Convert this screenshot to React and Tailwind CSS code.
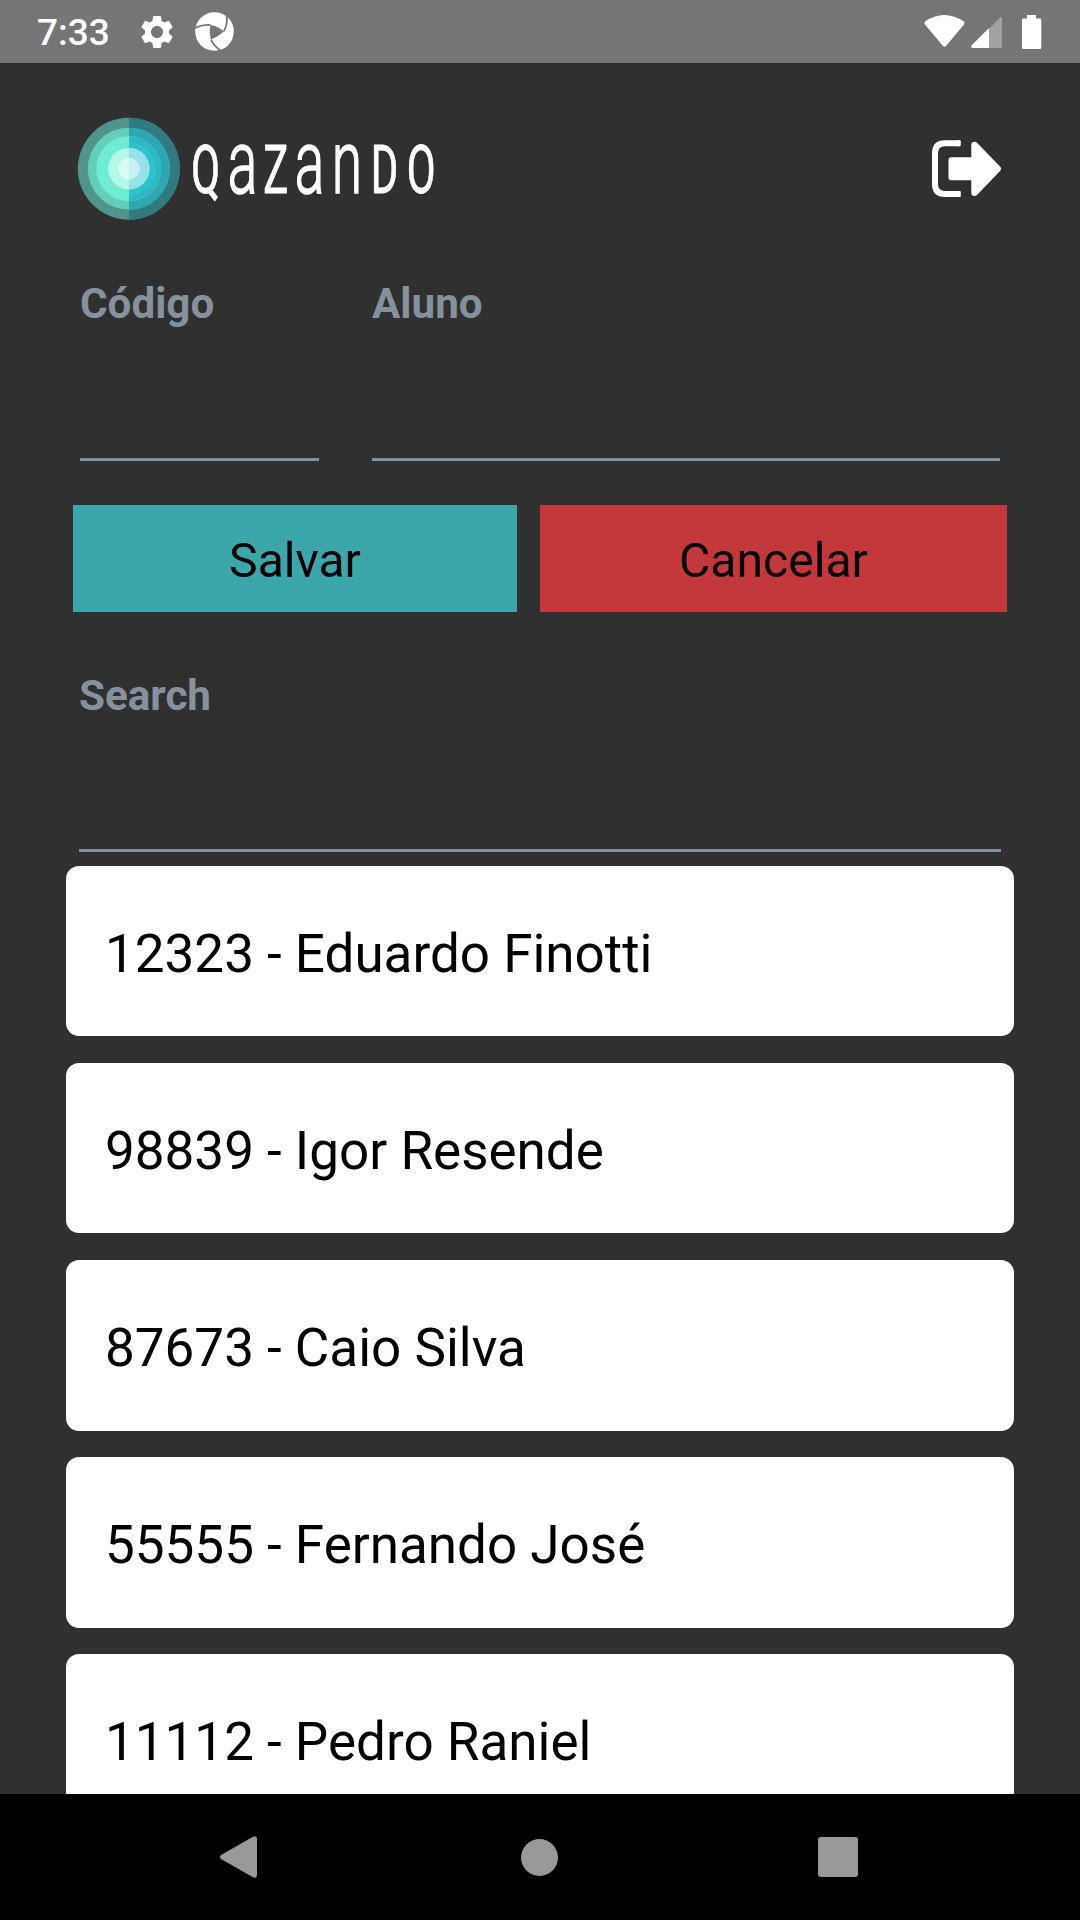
import { MdSettings } from "react-icons/md";

const students = [
  "12323 - Eduardo Finotti",
  "98839 - Igor Resende",
  "87673 - Caio Silva",
  "55555 - Fernando José",
  "11112 - Pedro Raniel",
];

const rings = [
  [51, "#51958a", "#317b80"],
  [41, "#64cfb9", "#2da7b1"],
  [32.5, "#6fecd4", "#2bb9c3"],
  [26, "#6fecd4", "#2bc3cf"],
  [20.7, "#b5f7e9", "#98e1e6"],
  [10.7, "#dbfbf5", "#c9f0f2"],
];

function StatusBar() {
  return (
    <header className="flex h-[63px] shrink-0 items-center bg-[#757575] pl-[37px] pr-[38px] text-white">
      <span className="w-[100px] pt-[3px] text-[37px] leading-[60px] font-medium">7:33</span>
      <MdSettings className="size-10" />
      <svg className="ml-[18px] size-[39px]" viewBox="195 12 39 39">
        <circle cx="214.500" cy="31.500" r="19.300" fill="#fff" />
        <path d="M210.500 25 Q208.800 33 211 39.500 Q218 37 223.500 31.500 Q218 26 210.500 25Z" fill="#757575" />
        <path d="M195 28 Q203 24 210.500 25M226.500 15 Q228 25 223.500 31.500M221 51 Q213 45 211 39.500" fill="none" stroke="#757575" strokeWidth="1.800" />
      </svg>
      <svg className="ml-auto h-[36px] w-[118px]" viewBox="924 13 118 36">
        <path d="M925 20.500 Q944 7.500 964 20.500 Q965 22 964 23.500 L946 45 Q944.500 46.500 943 45 L925 23.500 Q924 22 925 20.500Z" fill="#fff" />
        <path d="M989 28 L1000 16.500 Q1002 15.500 1002 17 V46 Q1002 47 1001 47 H989Z" fill="#a1a1a1" />
        <path d="M989 27 V47 H972 Q970.500 46 971.500 44.500Z" fill="#fff" />
        <path d="M1027 14 H1036 V17.500 H1040 Q1041.300 17.500 1041.300 19 V46.500 Q1041.300 48 1040 48 H1023 Q1022 48 1022 46.500 V19 Q1022 17.500 1023 17.500 H1027Z" fill="#fff" />
      </svg>
    </header>
  );
}

function Logo() {
  return (
    <svg className="h-[130px] w-[360px] overflow-visible" viewBox="77 104 360 130">
      {rings.map(([r, left, right]) => (
        <g key={r}>
          <circle cx="128.800" cy="168.700" r={r} fill={left} />
          <path d={`M129 ${168.7 - r} a${r - 0.2} ${r} 0 0 1 0 ${2 * r}Z`} fill={right} />
        </g>
      ))}
      <text y="193.300" transform="scale(.62 1)" fill="#fff" stroke="#fff" fontSize="67.500" fontFamily="Roboto, sans-serif">
        <tspan x="308.500" strokeWidth=".9">Q</tspan>
        <tspan x="367.500" fontSize="89" fontWeight="300" strokeWidth="1.700">a</tspan>
        <tspan x="424.500" strokeWidth=".9">Z</tspan>
        <tspan x="475.500" fontSize="89" fontWeight="300" strokeWidth="1.700">a</tspan>
        <tspan x="535" fontSize="89" fontWeight="300" strokeWidth="1.700">n</tspan>
        <tspan x="598" strokeWidth=".9">D</tspan>
        <tspan x="656" strokeWidth=".9">O</tspan>
      </text>
    </svg>
  );
}

function LogoutIcon() {
  return (
    <svg className="h-[60px] w-[70px]" viewBox="932 139 70 60" fill="#fff">
      <path d="M959.500 143.300 H945 Q935 143.300 935 153.300 V184 Q935 194 945 194 H959.500" fill="none" stroke="#fff" strokeWidth="6" />
      <rect x="956" y="140.300" width="4.800" height="6" rx="1" />
      <rect x="956" y="191" width="4.800" height="6" rx="1" />
      <path d="M951 157.300 H971.300 V144.500 Q971.500 141.700 974.500 141.700 Q976 141.700 977 142.800 L1000 166.500 Q1002 168.700 1000 171 L977 195 Q975 196.500 973 195.700 Q971.300 195 971.300 193 V180.300 H951 Q948.500 180.300 948.500 177.500 V160 Q948.500 157.300 951 157.300Z" />
    </svg>
  );
}

function Field({ label, className }) {
  return (
    <label className={`flex flex-col border-b-3 border-[#85929e] pt-px ${className}`}>
      <span className="text-[42.2px] leading-[50px] font-bold text-[#85929e]">{label}</span>
    </label>
  );
}

export default function App() {
  return (
    <div className="flex h-[1920px] w-[1080px] flex-col overflow-hidden bg-[#303030] font-[Roboto,sans-serif]">
      <StatusBar />
      <main className="flex min-h-0 flex-1 flex-col overflow-hidden">
        <div className="flex items-center justify-between pt-[41px] pr-[78px] pl-[77px]">
          <Logo />
          <LogoutIcon />
        </div>
        <div className="mt-11 flex gap-[53px] px-20">
          <Field label="Código" className="h-[183px] w-[239px]" />
          <Field label="Aluno" className="h-[183px] flex-1" />
        </div>
        <div className="mt-11 flex shrink-0 gap-[23px] pr-[73px] pl-[73px]">
          <button className="h-[107px] w-[444px] bg-[#3ba7ab] pt-[5px] text-[48.1px] leading-[102px] text-black">Salvar</button>
          <button className="h-[107px] w-[467px] bg-[#c3393b] pt-[5px] text-[48.1px] leading-[102px] text-black">Cancelar</button>
        </div>
        <div className="mt-[58px] px-[79px]">
          <Field label="Search" className="h-[182px]" />
        </div>
        <ul className="mt-3.5 flex flex-col gap-[26.7px] px-[66px]">
          {students.map((s) => (
            <li key={s} className="flex h-[170.4px] shrink-0 items-center rounded-[13px] bg-white pt-[5px] pl-[39px] text-[53px] leading-[62px] text-black">
              {s}
            </li>
          ))}
        </ul>
      </main>
      <nav className="flex h-[126px] shrink-0 items-center justify-between bg-black pr-[222px] pl-[220px]">
        <svg className="h-[42px] w-[37px]" viewBox="0 0 37 42" fill="#999">
          <path d="M1 19 L33 .8 Q37 -1 37 3 V39 Q37 43 33 41.200 L1 23 Q-1 21 1 19Z" />
        </svg>
        <div className="ml-[3px] size-[37px] rounded-full bg-[#999]" />
        <div className="size-10 rounded-[3px] bg-[#999]" />
      </nav>
    </div>
  );
}
